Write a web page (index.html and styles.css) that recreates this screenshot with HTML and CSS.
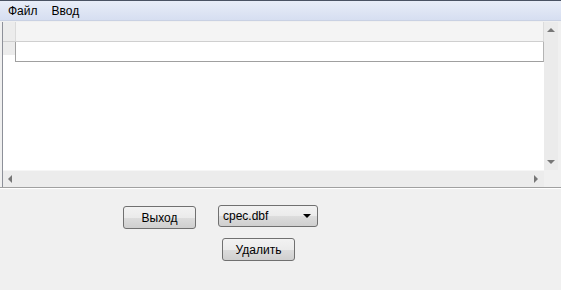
FILE: index.html
```html
<!DOCTYPE html>
<html>
<head>
<meta name="viewport" content="width=device-width, initial-scale=1">
<link rel="stylesheet" href="styles.css">
</head>
<body>
<!-- Menu -->
<div class="menubar">
  <span class="menuitem">Файл</span>
  <span class="menuitem">Ввод</span>
</div>

<!-- Grid view -->
<div class="view">
  <div class="gridcol">
    <div class="table">
      <div class="hdr">
        <div class="rowhead"></div>
        <div class="hcell"></div>
      </div>
      <div class="row">
        <div class="rowhead cur"></div>
        <div class="cell"></div>
      </div>
    </div>
    <div class="hscroll">
      <span class="arr left"></span>
      <span class="arr right"></span>
    </div>
  </div>
  <div class="vcol">
    <div class="vscroll">
      <span class="arr up"></span>
      <span class="arr down"></span>
    </div>
    <div class="corner"></div>
  </div>
</div>

<!-- Buttons -->
<div class="panel">
  <div class="line1">
    <button class="btn exit">Выход</button>
    <div class="combo"><span>cpec.dbf</span><span class="drop"></span></div>
  </div>
  <div class="line2">
    <button class="btn del">Удалить</button>
  </div>
</div>
</body>
</html>
```

FILE: styles.css
```css
body {
  margin: 0;
  width: 561px;
  height: 290px;
  background: #f0f0f0;
  font-family: "Liberation Sans", Arial, sans-serif;
  font-size: 12px;
  color: #000;
  overflow: hidden;
}
.menubar {
  height: 19px;
  border-top: 1px solid #4a5263;
  background: linear-gradient(#e8edf8, #d6def1);
  border-bottom: 1px solid #c9d1e3;
  display: flex;
  align-items: center;
  padding-left: 8px;
  gap: 14px;
}
.menuitem {
  line-height: 18px;
}
.view {
  display: flex;
  height: 165px;
  margin-top: 1px;
  padding-left: 2px;
  border-bottom: 1px solid #a0a0a0;
}
.gridcol {
  flex: 1;
  display: flex;
  flex-direction: column;
  border-left: 1px solid #8d9099;
}
.table {
  flex: 1;
  background: #fff;
}
.hdr, .row {
  display: flex;
}
.hdr {
  height: 19px;
  background: #f4f4f4;
  border-bottom: 1px solid #cfcfcf;
}
.rowhead {
  width: 12px;
  background: #ececec;
  border-right: 1px solid #dadada;
}
.hcell {
  flex: 1;
  border-right: 1px solid #dcdcdc;
}
.row {
  height: 20px;
}
.rowhead.cur {
  background: linear-gradient(#ececec 65%, #fff 65%);
  border-right: 1px solid #a0a0a0;
}
.cell {
  flex: 1;
  border-bottom: 1px solid #a0a0a0;
  border-right: 1px solid #b4b4b4;
}
.hscroll {
  height: 16px;
  background: #ececec;
  border-top: 1px solid #f6f6f6;
  display: flex;
  align-items: center;
  justify-content: space-between;
  padding: 0 6px 0 5px;
}
.vcol {
  width: 14px;
  margin-right: 3px;
  display: flex;
  flex-direction: column;
}
.vscroll {
  flex: 1;
  background: #ebebeb;
  display: flex;
  flex-direction: column;
  align-items: center;
  justify-content: space-between;
  padding: 6px 0 6px;
}
.corner {
  height: 17px;
  background: #f0f0f0;
}
.arr {
  width: 0;
  height: 0;
  border: 4px solid transparent;
}
.arr.up {
  border-bottom-color: #777;
  border-top-width: 0;
}
.arr.down {
  border-top-color: #777;
  border-bottom-width: 0;
}
.arr.left {
  border-right-color: #777;
  border-left-width: 0;
}
.arr.right {
  border-left-color: #777;
  border-right-width: 0;
}
.panel {
  border-top: 1px solid #fff;
  padding-top: 16px;
}
.line1 {
  display: flex;
  align-items: flex-start;
}
.btn {
  box-sizing: border-box;
  width: 73px;
  height: 23px;
  padding: 0;
  border: 1px solid #707070;
  border-radius: 3px;
  background: linear-gradient(#f2f2f2, #ebebeb 50%, #dddddd 50%, #cfcfcf);
  font-family: "Liberation Sans", Arial, sans-serif;
  font-size: 12px;
  color: #000;
}
.exit {
  margin-left: 123px;
  margin-top: 1px;
}
.combo {
  box-sizing: border-box;
  width: 100px;
  height: 22px;
  margin-left: 22px;
  border: 1px solid #707070;
  border-radius: 3px;
  background: linear-gradient(#f2f2f2, #ebebeb 50%, #dddddd 50%, #cfcfcf);
  display: flex;
  align-items: center;
  justify-content: space-between;
  padding: 0 6px 0 4px;
}
.drop {
  width: 0;
  height: 0;
  border: 4px solid transparent;
  border-top-color: #000;
  border-bottom-width: 0;
}
.line2 {
  margin-top: 9px;
}
.del {
  margin-left: 222px;
}
```
